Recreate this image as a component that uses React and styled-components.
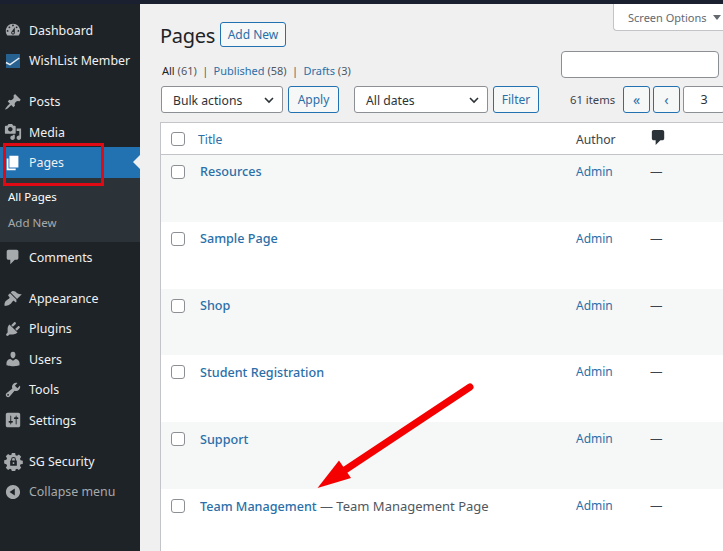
import React from "react";
import styled, { createGlobalStyle } from "styled-components";

const GlobalStyle = createGlobalStyle`
  html, body {
    margin: 0;
    padding: 0;
    height: 100%;
    overflow: hidden;
    background: #f0f0f1;
  }
  * { box-sizing: border-box; }
`;

const font = `"Noto Sans", "Open Sans", sans-serif`;
const link = "#2a6fa8";

const Page = styled.div`
  position: relative;
  width: 723px;
  height: 551px;
  overflow: hidden;
  display: flex;
  flex-direction: column;
  font-family: ${font};
  font-size: 12.5px;
  color: #3c434a;
`;

const TopBar = styled.div`
  height: 4px;
  flex: none;
  background: #1a2030;
`;

const Body = styled.div`
  flex: 1;
  display: flex;
  min-height: 0;
`;

const Sidebar = styled.nav`
  width: 140px;
  flex: none;
  background: #1d2327;
  padding-top: 11px;
  display: flex;
  flex-direction: column;
`;

const MenuItem = styled.div`
  position: relative;
  height: 30.6px;
  flex: none;
  display: flex;
  align-items: center;
  padding-left: 4px;
  gap: 7px;
  font-size: 12.4px;
  color: ${(p) => (p.$muted ? "#a7aaad" : "#f0f0f1")};
  background: ${(p) => (p.$active ? "#2271b1" : "transparent")};
  margin-bottom: ${(p) => (p.$gap ? "10.1px" : "0")};

  svg {
    flex: none;
    fill: ${(p) => (p.$active ? "#fff" : "#a7aaad")};
  }
`;

const ActiveNotch = styled.span`
  position: absolute;
  right: 0;
  top: 8px;
  border-style: solid;
  border-width: 7px 7px 7px 0;
  border-color: transparent #f0f0f1 transparent transparent;
`;

const SubMenu = styled.div`
  background: #2c3338;
  height: 64px;
  flex: none;
  padding-top: 9px;
  display: flex;
  flex-direction: column;
  gap: 6px;
`;

const SubItem = styled.div`
  padding-left: 8px;
  height: 20px;
  line-height: 20px;
  font-size: 11.5px;
  color: ${(p) => (p.$current ? "#fff" : "#a7aaad")};
`;

const Main = styled.main`
  flex: 1;
  min-width: 0;
  padding-left: 20px;
  display: flex;
  flex-direction: column;
`;

const Head = styled.header`
  display: flex;
  justify-content: space-between;
  height: 82px;
  flex: none;
`;

const HeadLeft = styled.div`
  padding-top: 18px;
`;

const TitleRow = styled.div`
  display: flex;
  align-items: center;
  gap: 5px;
  height: 25px;
`;

const Heading = styled.h1`
  margin: 1px 0 0;
  font-size: 20px;
  font-weight: 400;
  letter-spacing: -0.3px;
  color: #1d2327;
  line-height: 25px;
`;

const OutlineButton = styled.button`
  height: ${(p) => p.$height || 27}px;
  width: ${(p) => p.$width}px;
  flex: none;
  padding: 0;
  font-family: inherit;
  font-size: 12px;
  color: ${link};
  background: #f6f7f7;
  border: 1px solid #2271b1;
  border-radius: 3px;
`;

const Views = styled.ul`
  list-style: none;
  margin: 16px 0 0 2px;
  padding: 0;
  display: flex;
  gap: 5.4px;
  font-size: 11px;
  line-height: 16px;
  color: #50575e;
`;

const ViewLink = styled.li`
  color: ${(p) => (p.$current ? "#1d2327" : link)};
  span { color: #50575e; }
`;

const HeadRight = styled.div`
  width: 162px;
  overflow: hidden;
  display: flex;
  flex-direction: column;
  align-items: flex-end;
`;

const ScreenTab = styled.div`
  width: 110px;
  height: 27px;
  flex: none;
  display: flex;
  align-items: center;
  padding-left: 14px;
  gap: 6px;
  font-size: 11px;
  white-space: nowrap;
  color: #646970;
  background: #fff;
  border: 1px solid #c3c4c7;
  border-top: none;
  border-right: none;
  border-radius: 0 0 0 4px;
`;

const ScreenArrow = styled.span`
  border-style: solid;
  border-width: 5px 4px 0 4px;
  border-color: #646970 transparent transparent transparent;
`;

const SearchRow = styled.div`
  display: flex;
  gap: 4px;
  margin-top: 20px;
  width: 162px;
`;

const SearchInput = styled.div`
  width: 158px;
  height: 27px;
  flex: none;
  background: #fff;
  border: 1px solid #8c8f94;
  border-radius: 4px;
`;

const SearchButton = styled.div`
  width: 60px;
  height: 27px;
  flex: none;
  border: 1px solid #2271b1;
  background: #f6f7f7;
`;

const Toolbar = styled.div`
  display: flex;
  align-items: center;
  gap: 15px;
  height: 27px;
  flex: none;
  padding-left: 1px;
`;

const ControlGroup = styled.div`
  display: flex;
  gap: ${(p) => p.$gap ?? 5}px;
  flex: none;
`;

const SelectBox = styled.div`
  width: ${(p) => p.$width}px;
  height: 27px;
  flex: none;
  display: flex;
  align-items: center;
  justify-content: space-between;
  padding: 1px 7px 0 11px;
  font-size: 12.2px;
  color: #2c3338;
  background: #fff;
  border: 1px solid #8c8f94;
  border-radius: 3px;
`;

const Chevron = () => (
  <svg width="12" height="12" viewBox="0 0 12 12">
    <path d="M2 4l4 4 4-4" fill="none" stroke="#2c3338" strokeWidth="1.6" />
  </svg>
);

const ItemCount = styled.span`
  width: 44px;
  flex: none;
  margin: 0 -6px 0 16px;
  font-size: 11.3px;
  color: #3c434a;
  white-space: nowrap;
`;

const PageButton = styled(OutlineButton)`
  font-size: 14px;
  line-height: 1;
`;

const PageInput = styled.div`
  width: 42px;
  height: 27px;
  flex: none;
  display: flex;
  align-items: center;
  justify-content: center;
  background: #fff;
  border: 1px solid #8c8f94;
  border-radius: 3px;
  color: #2c3338;
  font-size: 12.5px;
`;

const Table = styled.div`
  margin-top: 9px;
  flex: 1;
  width: 620px;
  background: #fff;
  border: 1px solid #c3c4c7;
  border-right: none;
  border-bottom: none;
`;

const HeaderRow = styled.div`
  display: grid;
  grid-template-columns: 39px 376px 75px 1fr;
  align-items: center;
  height: 32px;
  background: #fff;
  border-bottom: 1px solid #c3c4c7;
`;

const Row = styled.div`
  display: grid;
  grid-template-columns: 39px 376px 75px 1fr;
  height: 66.8px;
  padding-top: 9px;
  background: ${(p) => (p.$alt ? "#f6f7f7" : "#fff")};
`;

const CheckCell = styled.div`
  padding-left: 10px;
`;

const Check = styled.span`
  display: block;
  width: 14px;
  height: 14px;
  margin-top: 1px;
  background: #fff;
  border: 1px solid #8c8f94;
  border-radius: 3px;
`;

const SortLink = styled.span`
  margin: 1px 0 0 -2px;
  color: ${link};
  font-size: 12.2px;
`;

const AuthorHead = styled.span`
  margin-top: 1px;
  color: #3c434a;
  font-size: 12.2px;
`;

const RowTitle = styled.div`
  margin-top: -0.6px;
  font-size: 12.6px;
  line-height: 18px;
  font-weight: 500;
  color: ${link};

  span {
    font-size: 13px;
    font-weight: 400;
    color: #50575e;
  }
`;

const AuthorLink = styled.div`
  font-size: 12px;
  line-height: 16px;
  color: ${link};
`;

const Dash = styled.div`
  margin-left: -1px;
  font-size: 12.5px;
  line-height: 16px;
  color: #3c434a;
`;

const CommentIcon = styled.svg`
  display: block;
  margin: -2px 0 0 -2px;
  fill: #2c3338;
`;

const SecuritySvg = styled.svg`
  margin: 0 -1px 0 0;
`;

const RedBox = styled.div`
  position: absolute;
  left: 3px;
  top: 143px;
  width: 101px;
  height: 43px;
  border: 3px solid #e00a14;
  pointer-events: none;
`;

const ArrowOverlay = styled.svg`
  position: absolute;
  left: 0;
  top: 0;
  pointer-events: none;
`;

const paths = {
  dashboard:
    "M3.76 16h12.48c1.1-1.37 1.76-3.11 1.76-5 0-4.42-3.58-8-8-8s-8 3.58-8 8c0 1.89.66 3.63 1.76 5zM10 4c.55 0 1 .45 1 1s-.45 1-1 1-1-.45-1-1 .45-1 1-1zM6 6c.55 0 1 .45 1 1s-.45 1-1 1-1-.45-1-1 .45-1 1-1zm8 0c.55 0 1 .45 1 1s-.45 1-1 1-1-.45-1-1 .45-1 1-1zm-5.37 5.55L12 7v6c0 1.1-.9 2-2 2s-2-.9-2-2c0-.57.24-1.08.63-1.45zM4 10c.55 0 1 .45 1 1s-.45 1-1 1-1-.45-1-1 .45-1 1-1zm12 0c.55 0 1 .45 1 1s-.45 1-1 1-1-.45-1-1 .45-1 1-1zm-5 3c0-.55-.45-1-1-1s-1 .45-1 1 .45 1 1 1 1-.45 1-1z",
  posts:
    "M10.44 3.02l1.82-1.82 6.36 6.35-1.83 1.82c-1.05-.68-2.48-.57-3.41.36l-.75.75c-.92.93-1.04 2.35-.35 3.41l-1.83 1.82-2.41-2.41-2.8 2.79c-.42.42-3.38 2.71-3.8 2.29s1.86-3.39 2.28-3.81l2.79-2.79L4.1 9.36l1.83-1.82c1.05.69 2.48.57 3.4-.36l.75-.75c.93-.92 1.05-2.35.36-3.41z",
  media:
    "M13 11V4c0-.55-.45-1-1-1h-1.67L9 1H5L3.67 3H2c-.55 0-1 .45-1 1v7c0 .55.45 1 1 1h10c.55 0 1-.45 1-1zM7 4.5c1.38 0 2.5 1.12 2.5 2.5S8.38 9.5 7 9.5 4.5 8.38 4.5 7 5.62 4.5 7 4.5zM14 6h5v10.5c0 1.38-1.12 2.5-2.5 2.5S14 17.88 14 16.5s1.12-2.5 2.5-2.5c.17 0 .34.02.5.05V9h-3V6zm-4 8.05V13h2v3.5c0 1.38-1.12 2.5-2.5 2.5S7 17.88 7 16.5 8.12 14 9.5 14c.17 0 .34.02.5.05z",
  pages: "M6 15V2h10v13H6zm-1 1h8v2H3V5h2v11z",
  comments:
    "M5 2h9c1.1 0 2 .9 2 2v7c0 1.1-.9 2-2 2h-2l-5 5v-5H5c-1.1 0-2-.9-2-2V4c0-1.1.9-2 2-2z",
  appearance:
    "M14.48 11.06L7.41 3.99l1.5-1.5c.5-.56 2.3-.47 3.51.32 1.21.8 1.43 1.28 2.91 2.1 1.18.64 2.45 1.26 4.45.85zm-.71.71L6.7 4.7 4.93 6.47c-.39.39-.39 1.02 0 1.41l1.06 1.06c.39.39.39 1.03 0 1.42-.6.6-1.43 1.11-2.21 1.69-.35.26-.7.53-1.01.84C1.43 13.23.78 15.37.56 16.8c-.12.89-.09 1.6.1 1.79.18.18.89.22 1.79.09 1.43-.21 3.57-.87 4.93-2.21.3-.31.58-.66.83-1.01.59-.78 1.09-1.61 1.7-2.21.39-.39 1.02-.39 1.41 0l1.06 1.06c.39.39 1.02.39 1.41 0z",
  plugins:
    "M13.11 4.36L9.87 7.6 8 5.73l3.24-3.24c.35-.34 1.05-.2 1.56.32.52.51.66 1.21.31 1.55zm-8 1.77l.91-1.12 9.01 9.01-1.19.84c-.71.71-2.63 1.16-3.82 1.16H6.14L4.9 17.26c-.59.59-1.54.59-2.12 0-.59-.58-.59-1.53 0-2.12l1.24-1.24v-3.88c0-1.13.4-3.19 1.09-3.89zm7.26 3.97l3.24-3.24c.34-.35 1.04-.21 1.55.31.52.51.66 1.21.31 1.55l-3.24 3.25z",
  users:
    "M10 9.25c-2.27 0-2.73-3.44-2.73-3.44C7 4.02 7.82 2 9.97 2c2.16 0 2.98 2.02 2.71 3.81 0 0-.41 3.44-2.68 3.44zm0 2.57L12.72 10c2.39 0 4.52 2.33 4.52 4.53v2.49s-3.65 1.13-7.24 1.13c-3.65 0-7.24-1.13-7.24-1.13v-2.49c0-2.25 1.94-4.48 4.47-4.48z",
  tools:
    "M16.68 9.77c-1.34 1.34-3.3 1.67-4.95.99l-5.41 6.52c-.99.99-2.59.99-3.58 0s-.99-2.59 0-3.57l6.52-5.42c-.68-1.65-.35-3.61.99-4.95 1.28-1.28 3.12-1.62 4.72-1.06l-2.89 2.89 2.82 2.82 2.86-2.87c.53 1.58.18 3.39-1.08 4.65zM3.81 16.21c.4.39 1.04.39 1.43 0 .4-.4.4-1.04 0-1.43-.39-.4-1.03-.4-1.43 0-.39.39-.39 1.03 0 1.43z",
  settings:
    "M18 16V4c0-1.1-.9-2-2-2H4c-1.1 0-2 .9-2 2v12c0 1.1.9 2 2 2h12c1.1 0 2-.9 2-2zM8 11h1c.55 0 1 .45 1 1s-.45 1-1 1H8v1.5c0 .28-.22.5-.5.5s-.5-.22-.5-.5V13H6c-.55 0-1-.45-1-1s.45-1 1-1h1V5.5c0-.28.22-.5.5-.5s.5.22.5.5V11zm5-2h-1c-.55 0-1-.45-1-1s.45-1 1-1h1V5.5c0-.28.22-.5.5-.5s.5.22.5.5V7h1c.55 0 1 .45 1 1s-.45 1-1 1h-1v5.5c0 .28-.22.5-.5.5s-.5-.22-.5-.5V9z",
  collapse:
    "M10 2.16c4.33 0 7.84 3.51 7.84 7.84s-3.51 7.84-7.84 7.84S2.16 14.33 2.16 10 5.71 2.16 10 2.16zm2 11.72V6.12L6.18 9.97z",
};

const Dashicon = ({ name }) => (
  <svg width="18" height="18" viewBox="0 0 20 20">
    <path d={paths[name]} />
  </svg>
);

const WishListIcon = () => (
  <svg width="18" height="18" viewBox="0 0 18 18">
    <rect x="2" y="2" width="14" height="14" fill="#27618f" />
    <path d="M2 10.5l4 2.2 9.3-6.7" fill="none" stroke="#e8eef3" strokeWidth="1.5" />
  </svg>
);

const SecurityIcon = () => (
  <SecuritySvg width="19" height="19" viewBox="0 0 20 20">
    <path
      fillRule="evenodd"
      d="M8.3 1h3.4l.5 2.3 1.5.7 2-1.3 2.4 2.4-1.3 2 .7 1.5 2.3.5v3.4l-2.3.5-.7 1.5 1.3 2-2.4 2.4-2-1.3-1.5.7-.5 2.3H8.3l-.5-2.3-1.5-.7-2 1.3-2.4-2.4 1.3-2-.7-1.5L.2 12V8.6l2.3-.5.7-1.5-1.3-2 2.4-2.4 2 1.3 1.5-.7zM6.5 9v5.5h7V9h-1V7.8a2.5 2.5 0 0 0-5 0V9zm2 0V7.8a1.5 1.5 0 0 1 3 0V9zm.7 1.7h1.6v2h-1.6z"
    />
  </SecuritySvg>
);

const pages = [
  { title: "Resources", alt: true },
  { title: "Sample Page" },
  { title: "Shop", alt: true },
  { title: "Student Registration" },
  { title: "Support", alt: true },
  { title: "Team Management", note: " — Team Management Page" },
];

export default function App() {
  return (
    <>
      <GlobalStyle />
      <Page>
        <TopBar />
        <Body>
          <Sidebar>
            <MenuItem><Dashicon name="dashboard" />Dashboard</MenuItem>
            <MenuItem $gap><WishListIcon />WishList Member</MenuItem>
            <MenuItem><Dashicon name="posts" />Posts</MenuItem>
            <MenuItem><Dashicon name="media" />Media</MenuItem>
            <MenuItem $active><Dashicon name="pages" />Pages<ActiveNotch /></MenuItem>
            <SubMenu>
              <SubItem $current>All Pages</SubItem>
              <SubItem>Add New</SubItem>
            </SubMenu>
            <MenuItem $gap><Dashicon name="comments" />Comments</MenuItem>
            <MenuItem><Dashicon name="appearance" />Appearance</MenuItem>
            <MenuItem><Dashicon name="plugins" />Plugins</MenuItem>
            <MenuItem><Dashicon name="users" />Users</MenuItem>
            <MenuItem><Dashicon name="tools" />Tools</MenuItem>
            <MenuItem $gap><Dashicon name="settings" />Settings</MenuItem>
            <MenuItem><SecurityIcon />SG Security</MenuItem>
            <MenuItem $muted><Dashicon name="collapse" />Collapse menu</MenuItem>
          </Sidebar>
          <Main>
            <Head>
              <HeadLeft>
                <TitleRow>
                  <Heading>Pages</Heading>
                  <OutlineButton $width={66} $height={25}>Add New</OutlineButton>
                </TitleRow>
                <Views>
                  <ViewLink $current>All <span>(61)</span></ViewLink>
                  <li>|</li>
                  <ViewLink>Published <span>(58)</span></ViewLink>
                  <li>|</li>
                  <ViewLink>Drafts <span>(3)</span></ViewLink>
                </Views>
              </HeadLeft>
              <HeadRight>
                <ScreenTab>Screen Options<ScreenArrow /></ScreenTab>
                <SearchRow>
                  <SearchInput />
                  <SearchButton />
                </SearchRow>
              </HeadRight>
            </Head>
            <Toolbar>
              <ControlGroup>
                <SelectBox $width={122}>Bulk actions<Chevron /></SelectBox>
                <OutlineButton $width={51}>Apply</OutlineButton>
              </ControlGroup>
              <ControlGroup>
                <SelectBox $width={134}>All dates<Chevron /></SelectBox>
                <OutlineButton $width={46}>Filter</OutlineButton>
              </ControlGroup>
              <ItemCount>61 items</ItemCount>
              <ControlGroup $gap={3}>
                <PageButton $width={27}>«</PageButton>
                <PageButton $width={27}>‹</PageButton>
                <PageInput>3</PageInput>
              </ControlGroup>
            </Toolbar>
            <Table>
              <HeaderRow>
                <CheckCell><Check /></CheckCell>
                <SortLink>Title</SortLink>
                <AuthorHead>Author</AuthorHead>
                <CommentIcon width="19" height="19" viewBox="0 0 20 20">
                  <path d={paths.comments} />
                </CommentIcon>
              </HeaderRow>
              {pages.map((page) => (
                <Row key={page.title} $alt={page.alt}>
                  <CheckCell><Check /></CheckCell>
                  <RowTitle>
                    {page.title}
                    {page.note && <span>{page.note}</span>}
                  </RowTitle>
                  <AuthorLink>Admin</AuthorLink>
                  <Dash>—</Dash>
                </Row>
              ))}
            </Table>
          </Main>
        </Body>
        <RedBox />
        <ArrowOverlay width="723" height="551" viewBox="0 0 723 551">
          <line x1="470" y1="387" x2="345" y2="470" stroke="#f40000" strokeWidth="7" strokeLinecap="round" />
          <polygon points="317.5,488 339,460.5 351,478" fill="#f40000" />
        </ArrowOverlay>
      </Page>
    </>
  );
}
